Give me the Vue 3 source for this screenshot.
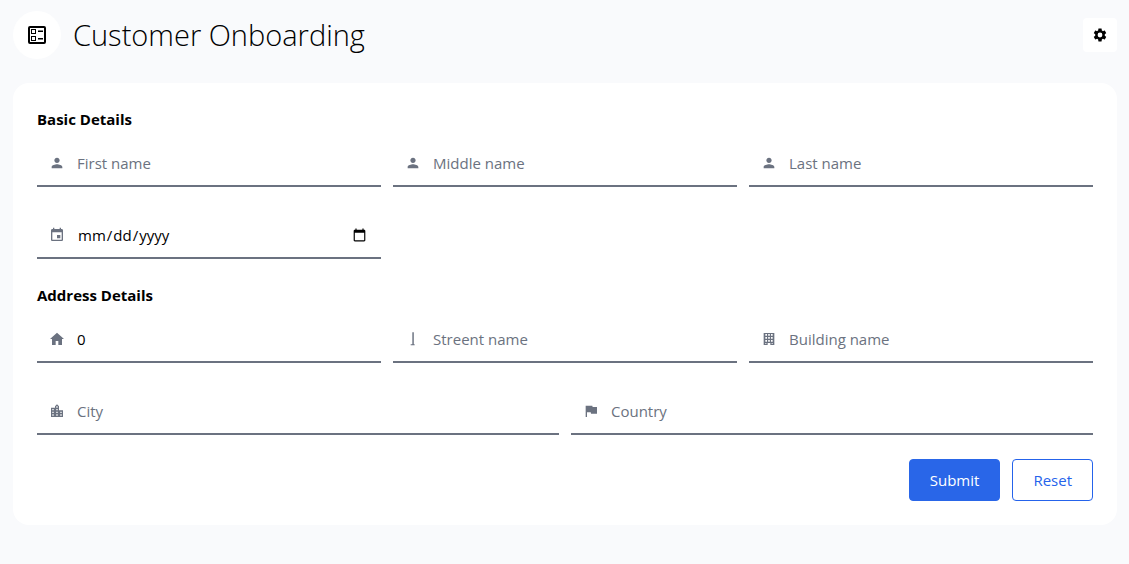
<script setup>
import { reactive } from 'vue'

const icons = {
  person: 'M12 12c2.21 0 4-1.79 4-4s-1.79-4-4-4-4 1.79-4 4 1.79 4 4 4zm0 2c-2.67 0-8 1.34-8 4v2h16v-2c0-2.66-5.33-4-8-4z',
  event: 'M17 12h-5v5h5v-5zM16 1v2H8V1H6v2H5c-1.11 0-1.99.9-1.99 2L3 19c0 1.1.89 2 2 2h14c1.1 0 2-.9 2-2V5c0-1.1-.9-2-2-2h-1V1h-2zm3 18H5V8h14v11z',
  home: 'M12 2.5 1.5 12H4.5v9h5.5v-6h4v6h5.500v-9h3z',
  street: 'M11 2h2.200v18h1.300v1.500h-6V20H11z',
  building: 'M4 3h16v18h-6v-3h-4v3H4zM6.500 4.500v2.500h2.500V4.500zm4.250 0v2.500h2.500V4.500zM15 4.500v2.500h2.500V4.500zM6.500 9v2.500h2.500V9zm4.250 0v2.500h2.500V9zM15 9v2.500h2.500V9zM6.500 13.500v2.500h2.500v-2.500zm4.250 0v2.500h2.500v-2.500zM15 13.500v2.500h2.500v-2.500zM6.500 18v1.500H8V18zm9.500 0v1.500h1.500V18z',
  city: 'M15 11V5l-3-3-3 3v2H3v14h18V11h-6zm-8 8H5v-2h2v2zm0-4H5v-2h2v2zm0-4H5V9h2v2zm6 8h-2v-2h2v2zm0-4h-2v-2h2v2zm0-4h-2V9h2v2zm0-4h-2V5h2v2zm6 12h-2v-2h2v2zm0-4h-2v-2h2v2z',
  flag: 'M14.400 6 14 4H4v17h2v-7h5.600l.4 2H21V6z'
}

const blank = {
  firstName: '', middleName: '', lastName: '', birthDate: '',
  houseNumber: 0, street: '', building: '', city: '', country: ''
}
const form = reactive({ ...blank })

const basicRows = [
  [
    { key: 'firstName', label: 'First name', icon: 'person', type: 'text' },
    { key: 'middleName', label: 'Middle name', icon: 'person', type: 'text' },
    { key: 'lastName', label: 'Last name', icon: 'person', type: 'text' }
  ],
  [{ key: 'birthDate', label: 'Date of birth', icon: 'event', type: 'date' }]
]
const addressRows = [
  [
    { key: 'houseNumber', label: 'House number', icon: 'home', type: 'number' },
    { key: 'street', label: 'Streent name', icon: 'street', type: 'text' },
    { key: 'building', label: 'Building name', icon: 'building', type: 'text' }
  ],
  [
    { key: 'city', label: 'City', icon: 'city', type: 'text' },
    { key: 'country', label: 'Country', icon: 'flag', type: 'text' }
  ]
]
const sections = [
  { title: 'Basic Details', rows: basicRows },
  { title: 'Address Details', rows: addressRows }
]

function reset() {
  Object.assign(form, blank)
}
</script>

<template>
  <main class="page">
    <header class="header">
      <span class="badge">
        <svg class="badge-icon" viewBox="0 0 24 24" aria-hidden="true">
          <path fill-rule="evenodd" d="M5 3h14a2 2 0 0 1 2 2v14a2 2 0 0 1-2 2H5a2 2 0 0 1-2-2V5a2 2 0 0 1 2-2zm0 2v14h14V5zM6 6h5v5H6zm1 1v3h3V7zM6 13h5v5H6zm1 1v3h3v-3zM13 7.500h5V9h-5zM13 15h5v1.500h-5z" />
        </svg>
      </span>
      <h1 class="title">Customer Onboarding</h1>
      <button class="settings" type="button" aria-label="Settings">
        <svg class="settings-icon" viewBox="0 0 24 24" aria-hidden="true">
          <path fill-rule="evenodd" d="M19.140 12.940c.04-.3.060-.61.060-.94 0-.32-.02-.64-.07-.94l2.030-1.580c.18-.14.230-.41.120-.61l-1.920-3.320c-.12-.22-.37-.29-.59-.22l-2.390.96c-.5-.38-1.030-.7-1.620-.94l-.36-2.540c-.04-.24-.24-.41-.48-.41h-3.840c-.24 0-.43.170-.47.410l-.36 2.540c-.59.240-1.130.570-1.620.940l-2.390-.96c-.22-.08-.47 0-.59.220L2.740 8.870c-.12.210-.08.470.120.610l2.030 1.580c-.05.3-.09.630-.09.940s.02.640.070.940l-2.030 1.580c-.18.140-.23.410-.12.610l1.920 3.320c.12.220.37.290.59.220l2.390-.96c.5.380 1.030.7 1.620.940l.36 2.540c.05.240.240.410.480.410h3.840c.24 0 .44-.17.470-.41l.36-2.540c.59-.24 1.130-.56 1.620-.94l2.390.96c.22.080.470 0 .59-.22l1.920-3.320c.12-.22.070-.47-.12-.61l-2.010-1.580zM12 15.600a3.600 3.600 0 1 1 0-7.200 3.600 3.600 0 0 1 0 7.200z" />
        </svg>
      </button>
    </header>

    <form class="card" @submit.prevent @reset.prevent="reset">
      <section v-for="section in sections" :key="section.title" class="section">
        <h2 class="section-title">{{ section.title }}</h2>
        <div class="rows">
          <div
            v-for="(row, index) in section.rows"
            :key="index"
            class="row"
            :class="{ halves: row.length === 2 }"
          >
            <label v-for="field in row" :key="field.key" class="field">
              <svg class="field-icon" viewBox="0 0 24 24" aria-hidden="true">
                <path fill-rule="evenodd" :d="icons[field.icon]" />
              </svg>
              <input
                v-model="form[field.key]"
                class="input"
                :type="field.type"
                :placeholder="field.label"
                :aria-label="field.label"
              />
            </label>
          </div>
        </div>
      </section>
      <div class="actions">
        <button class="button primary" type="submit">Submit</button>
        <button class="button outline" type="reset">Reset</button>
      </div>
    </form>
  </main>
</template>

<style>
html,
body {
  margin: 0;
  min-height: 100%;
  background: #f9fafc;
}
</style>

<style scoped>
.page {
  box-sizing: border-box;
  padding: 11px 12px 24px 13px;
  color: #000;
  font-family: "Segoe UI", "Open Sans", "Noto Sans", sans-serif;
  font-size: 15px;
  line-height: 24px;
}
.header {
  display: flex;
  align-items: center;
  gap: 12px;
  margin-bottom: 24px;
}
.badge {
  display: grid;
  place-items: center;
  width: 48px;
  height: 48px;
  border-radius: 50%;
  background: #fff;
}
.badge-icon {
  width: 24px;
  height: 24px;
}
.title {
  flex: 1;
  margin: 0;
  font-size: 29px;
  font-weight: 350;
  line-height: 36px;
}
.settings {
  display: grid;
  place-items: center;
  width: 34px;
  height: 34px;
  padding: 0;
  border: 0;
  border-radius: 4px;
  background: #fff;
}
.settings-icon {
  width: 16px;
  height: 16px;
}
.card {
  padding: 24px;
  border-radius: 16px;
  background: #fff;
}
.section {
  margin-bottom: 24px;
}
.section-title {
  margin: 0 0 8px;
  font-size: 15px;
  font-weight: 700;
  line-height: 24px;
}
.rows {
  display: grid;
  gap: 24px;
}
.row {
  display: grid;
  grid-template-columns: repeat(3, minmax(0, 1fr));
  gap: 12px;
}
.row.halves {
  grid-template-columns: repeat(2, minmax(0, 1fr));
}
.field {
  display: flex;
  align-items: center;
  gap: 12px;
  box-sizing: border-box;
  height: 48px;
  padding: 2px 12px 0;
  border-bottom: 2px solid #6b7280;
}
.field-icon {
  flex: none;
  width: 16px;
  height: 16px;
  fill: #6b7280;
}
.input {
  flex: 1;
  min-width: 0;
  height: 32px;
  padding: 0;
  border: 0;
  outline: 0;
  background: transparent;
  color: #000;
  font: inherit;
}
.input::placeholder {
  color: #6b7280;
  opacity: 1;
}
.actions {
  display: flex;
  justify-content: flex-end;
  gap: 12px;
}
.button {
  box-sizing: border-box;
  height: 42px;
  padding: 0 20px;
  border: 1px solid #2563eb;
  border-radius: 4px;
  font: inherit;
}
.primary {
  background: #2966e8;
  border-color: #2966e8;
  color: #fff;
}
.outline {
  background: #fff;
  color: #2563eb;
}
</style>
